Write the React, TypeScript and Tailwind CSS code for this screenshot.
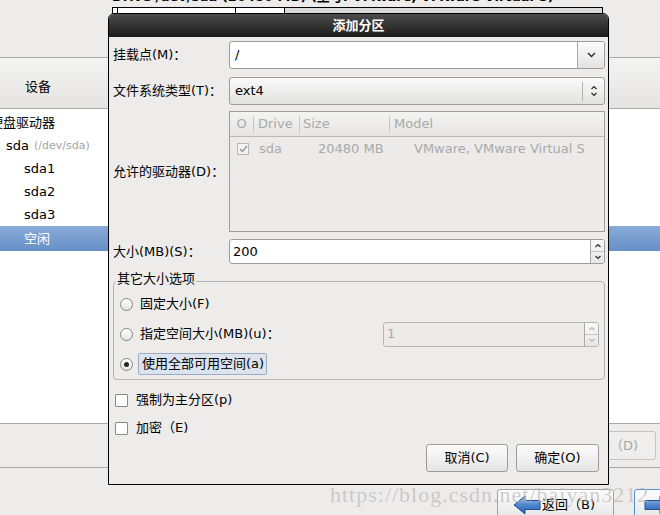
import React from 'react';

function ChevronDown() {
  return (
    <svg width="9" height="6" viewBox="0 0 9 6">
      <path d="M1 1l3.5 3.5L8 1" fill="none" stroke="#2a2a2a" strokeWidth="1.4" />
    </svg>
  );
}

function UpDown({ color = '#2a2a2a' }: { color?: string }) {
  return (
    <svg width="8" height="14" viewBox="0 0 8 14">
      <path d="M1.5 5l2.5-2.5L6.5 5" fill="none" stroke={color} strokeWidth="1.2" />
      <path d="M1.5 9l2.5 2.5L6.5 9" fill="none" stroke={color} strokeWidth="1.2" />
    </svg>
  );
}

function SpinButtons({ disabled = false }: { disabled?: boolean }) {
  const c = disabled ? '#b4b4b4' : '#2a2a2a';
  return (
    <div className="flex w-[14px] flex-col border-l border-[#a8a8a8] bg-linear-to-b from-[#fafafa] to-[#e6e6e6]">
      <div className="flex flex-1 items-center justify-center border-b border-[#c4c4c4]">
        <svg width="8" height="5" viewBox="0 0 8 5">
          <path d="M1.5 4l2.5-2.5L6.5 4" fill="none" stroke={c} strokeWidth="1.2" />
        </svg>
      </div>
      <div className="flex flex-1 items-center justify-center">
        <svg width="8" height="5" viewBox="0 0 8 5">
          <path d="M1.5 1l2.5 2.5L6.5 1" fill="none" stroke={c} strokeWidth="1.2" />
        </svg>
      </div>
    </div>
  );
}

function Radio({ checked = false }: { checked?: boolean }) {
  return (
    <div className="flex h-[13px] w-[13px] shrink-0 items-center justify-center rounded-full border border-[#858585] bg-linear-to-b from-[#ffffff] to-[#e4e4e4]">
      {checked && <div className="h-[5px] w-[5px] rounded-full bg-[#262626]" />}
    </div>
  );
}

function CheckBox() {
  return <div className="h-[13px] w-[13px] shrink-0 rounded-[1px] border border-[#8a8a8a] bg-white" />;
}

function BlueArrow({ id, flip = false }: { id: string; flip?: boolean }) {
  return (
    <svg width="28" height="20" viewBox="0 0 28 20" className={flip ? '-scale-x-100' : ''}>
      <defs>
        <linearGradient id={id} x1="0" y1="0" x2="0" y2="1">
          <stop offset="0" stopColor="#a8c6ee" />
          <stop offset="0.5" stopColor="#4f85cf" />
          <stop offset="1" stopColor="#2b5fae" />
        </linearGradient>
      </defs>
      <path d="M1 10 L12 1 L12 5.5 L27 5.5 L27 14.5 L12 14.5 L12 19 Z" fill={`url(#${id})`} stroke="#1f4d94" strokeWidth="1" strokeLinejoin="round" />
    </svg>
  );
}

export default function App() {
  return (
    <div className="relative h-[515px] w-[660px] overflow-hidden bg-[#edeceb] font-['DejaVu_Sans','Noto_Sans_CJK_SC',sans-serif] text-[13px] leading-[16px] text-black">
      {/* installer page behind the dialog */}
      <div className="flex h-[57px] flex-col pl-[112px]">
        <div className="-mt-[10px] whitespace-nowrap font-bold leading-[13px]">
          Drive /dev/sda (20480 MB) (型号: VMware, VMware Virtual S)
        </div>
        <div className="mt-[4px] flex h-[36px] w-[491px] border border-black bg-[#d8d8d8]">
          <div className="w-[5px] border-r border-black bg-white" />
          <div className="w-[118px] border-r border-black bg-white" />
          <div className="w-[49px] border-r border-black bg-white" />
        </div>
      </div>

      <div className="flex h-[51px] border-t border-[#a9a9a9] bg-linear-to-b from-[#f3f3f2] to-[#e5e4e2] pt-[8px]">
        <div className="flex w-[76px] items-center justify-center">设备</div>
      </div>

      <div className="h-[315px] border-t border-[#a9a9a9] bg-white pt-[2px]">
        <div className="-ml-[10px] flex h-[23px] items-center">硬盘驱动器</div>
        <div className="flex h-[23px] items-center pl-[6px]">
          sda<span className="ml-[5px] text-[11px] text-[#a3a3a3]">(/dev/sda)</span>
        </div>
        <div className="flex h-[23px] items-center pl-[24px]">sda1</div>
        <div className="flex h-[23px] items-center pl-[24px]">sda2</div>
        <div className="flex h-[23px] items-center pl-[24px]">sda3</div>
        <div className="flex h-[25px] items-center bg-linear-to-b from-[#89abd8] to-[#6690c7] pl-[24px] text-white">空闲</div>
      </div>

      <div className="flex h-[44px] justify-end border-t border-[#a9a9a9] pr-[4px] pt-[7px]">
        <div className="flex h-[29px] w-[90px] items-center justify-center rounded-[3px] border border-[#c4c4c4] bg-[#efeeed] text-[#a6a6a6]">
          删除（D)
        </div>
      </div>

      <div className="flex gap-[20px] border-t border-[#a9a9a9] pl-[497px] pt-[21px]">
        <div className="flex h-[32px] w-[117px] shrink-0 items-center gap-[1px] rounded-[3px] border border-[#a3a3a3] bg-linear-to-b from-[#fcfcfc] to-[#e6e6e6] pl-[15px]">
          <BlueArrow id="back" />
          <span>返回（B)</span>
        </div>
        <div className="flex h-[32px] w-[110px] shrink-0 items-center rounded-[3px] border border-[#5b8dd3] bg-linear-to-b from-[#fcfcfc] to-[#e6e6e6] pl-[9px]">
          <BlueArrow id="next" flip />
        </div>
      </div>

      {/* 添加分区 dialog */}
      <div className="absolute left-[108px] top-[13px] h-[472px] w-[501px] overflow-hidden rounded-t-[6px] border border-black bg-[#edeceb]">
        <div className="flex h-[23px] items-center justify-center bg-linear-to-b from-[#4c4c4c] to-[#1c1c1c] font-bold text-white">
          添加分区
        </div>

        <div className="pl-[4px] pr-[3px]">
          {/* mount point */}
          <div className="mt-[4px] flex h-[28px] items-center">
            <div className="w-[116px]">挂载点(M)：</div>
            <div className="flex h-full flex-1 overflow-hidden rounded-[3px] border border-[#9c9c9c] bg-white">
              <div className="flex flex-1 items-center pl-[5px]">/</div>
              <div className="flex w-[27px] items-center justify-center border-l border-[#a8a8a8] bg-linear-to-b from-[#fbfbfb] to-[#e3e3e3]">
                <ChevronDown />
              </div>
            </div>
          </div>

          {/* file system type */}
          <div className="mt-[8px] flex h-[28px] items-center">
            <div className="w-[116px]">文件系统类型(T)：</div>
            <div className="flex h-full flex-1 items-center rounded-[3px] border border-[#9c9c9c] bg-linear-to-b from-[#fbfbfb] to-[#e2e2e1]">
              <div className="flex-1 pl-[5px]">ext4</div>
              <div className="h-[19px] w-px bg-[#b2b2b2]" />
              <div className="flex w-[21px] items-center justify-center">
                <UpDown />
              </div>
            </div>
          </div>

          {/* drives */}
          <div className="mt-[6px] flex h-[121px] items-center">
            <div className="w-[116px]">允许的驱动器(D)：</div>
            <div className="h-full flex-1 border border-[#9d9d9d] bg-[#ecebea] text-[#a9a9a9]">
              <div className="flex h-[25px] border-b border-[#b9b9b9] bg-linear-to-b from-[#f3f3f2] to-[#e6e5e3]">
                <div className="flex w-[23px] items-center justify-center">O</div>
                <div className="flex w-[46px] items-center">
                  <span className="h-[17px] w-px bg-[#c6c6c6]" />
                  <span className="pl-[4px]">Drive</span>
                </div>
                <div className="flex w-[90px] items-center">
                  <span className="h-[17px] w-px bg-[#c6c6c6]" />
                  <span className="pl-[3px]">Size</span>
                </div>
                <div className="flex flex-1 items-center">
                  <span className="h-[17px] w-px bg-[#c6c6c6]" />
                  <span className="pl-[4px]">Model</span>
                </div>
              </div>
              <div className="flex h-[24px] items-center whitespace-nowrap">
                <div className="w-[23px] pl-[7px]">
                  <div className="flex h-[12px] w-[12px] items-center justify-center border border-[#b8b8b8] bg-[#f4f4f4]">
                    <svg width="9" height="8" viewBox="0 0 9 8">
                      <path d="M1 4l2.3 2.5L8 1" fill="none" stroke="#9a9a9a" strokeWidth="1.5" />
                    </svg>
                  </div>
                </div>
                <div className="w-[46px] pl-[6px]">sda</div>
                <div className="w-[90px] pl-[19px]">20480 MB</div>
                <div className="flex-1 overflow-hidden pl-[25px]">VMware, VMware Virtual S</div>
              </div>
            </div>
          </div>

          {/* size */}
          <div className="mt-[7px] flex h-[25px] items-center">
            <div className="w-[116px]">大小(MB)(S)：</div>
            <div className="flex h-full flex-1 overflow-hidden rounded-[3px] border border-[#9c9c9c] bg-white">
              <div className="flex flex-1 items-center pl-[3px]">200</div>
              <SpinButtons />
            </div>
          </div>

          {/* other size options */}
          <fieldset className="mt-[8px] rounded-[4px] border border-[#b3b3b3]">
            <legend className="ml-[2px] px-[1px] pb-[5px] leading-[13px]">其它大小选项</legend>
            <div className="-mt-[1px] flex h-[30px] items-center pl-[6px]">
              <Radio />
              <span className="ml-[7px]">固定大小(F)</span>
            </div>
            <div className="flex h-[30px] items-center pl-[6px] pr-[5px]">
              <Radio />
              <span className="ml-[7px] flex-1">指定空间大小(MB)(u)：</span>
              <div className="flex h-[25px] w-[216px] overflow-hidden rounded-[3px] border border-[#b4b4b4] bg-[#ecebea]">
                <div className="flex flex-1 items-center pl-[3px] text-[#a9a9a9]">1</div>
                <SpinButtons disabled />
              </div>
            </div>
            <div className="flex h-[30px] items-center pl-[6px]">
              <Radio checked />
              <span className="ml-[5px] flex h-[22px] items-center rounded-[2px] border border-[#9aabc2] bg-[#dbe3ee] pl-[3px] pr-[2px]">
                使用全部可用空间(a)
              </span>
            </div>
          </fieldset>

          {/* checkboxes */}
          <div className="mt-[6px] flex h-[28px] items-center pl-[2px]">
            <CheckBox />
            <span className="ml-[8px]">强制为主分区(p)</span>
          </div>
          <div className="flex h-[28px] items-center pl-[2px]">
            <CheckBox />
            <span className="ml-[8px]">加密（E)</span>
          </div>

          {/* buttons */}
          <div className="mt-[2px] flex justify-end gap-[8px] pr-[6px]">
            <div className="flex h-[28px] w-[82px] items-center justify-center rounded-[3px] border border-[#9c9c9c] bg-linear-to-b from-[#fcfcfc] to-[#e5e5e5]">
              取消(C)
            </div>
            <div className="flex h-[28px] w-[83px] items-center justify-center rounded-[3px] border border-[#9c9c9c] bg-linear-to-b from-[#fcfcfc] to-[#e5e5e5]">
              确定(O)
            </div>
          </div>
        </div>
      </div>

      {/* watermark */}
      <div className="pointer-events-none absolute left-[330px] top-[484px] whitespace-nowrap font-['Liberation_Serif',serif] text-[22px] leading-none tracking-[1px] text-[#b9b9b9]/70">
        https://blog.csdn.net/baiyan3212
      </div>
    </div>
  );
}
